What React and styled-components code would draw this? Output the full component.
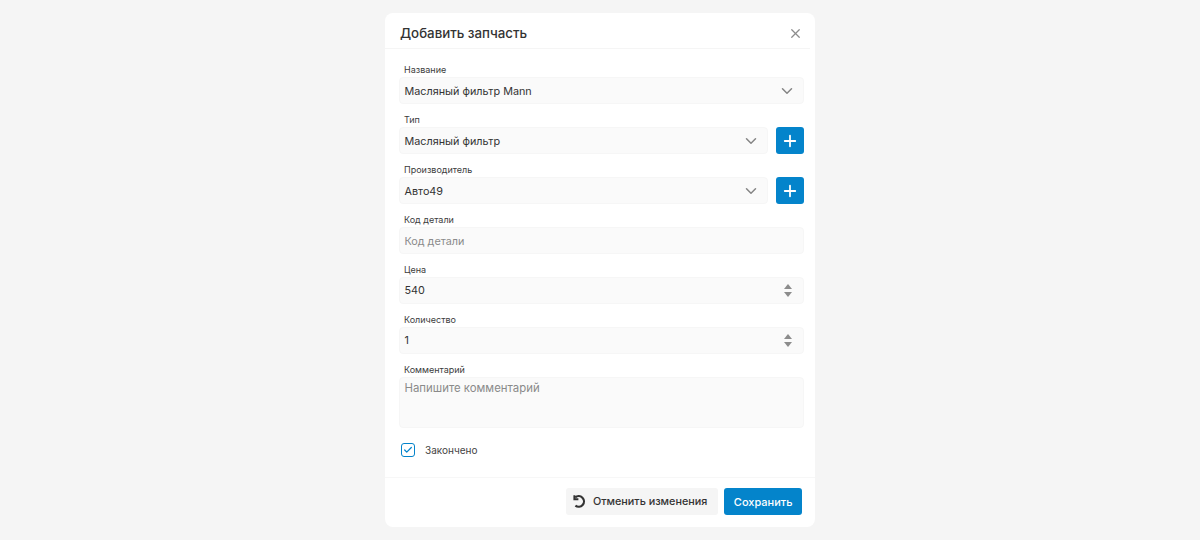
import React from "react";
import styled, { createGlobalStyle } from "styled-components";
import { ChevronDown, Plus, X, Check } from "lucide-react";

const GlobalStyle = createGlobalStyle`
  html, body {
    margin: 0;
    height: 100%;
    background: #f5f5f5;
    font-family: Inter, "Noto Sans", sans-serif;
  }
  * { box-sizing: border-box; }
`;

const Page = styled.div`
  width: 1200px;
  height: 540px;
  padding-top: 13px;
  display: flex;
  justify-content: center;
  align-items: flex-start;
  overflow: hidden;
`;

const Modal = styled.div`
  width: 430px;
  height: 514px;
  background: #fff;
  border-radius: 8px;
  display: flex;
  flex-direction: column;
`;

const Header = styled.div`
  height: 36px;
  margin: 0 5px 0 0;
  padding: 5px 7px 0 15px;
  border-bottom: 1px solid #f5f5f5;
  display: flex;
  align-items: center;
  justify-content: space-between;
`;

const Title = styled.div`
  font-size: 13.3px;
  font-weight: 500;
  color: #333;
`;

const Close = styled.div`
  display: flex;
  color: #8c8c8c;
`;

const Body = styled.div`
  padding: 13px 11.5px 0 14px;
  display: flex;
  flex-direction: column;
  gap: 8px;
`;

const Field = styled.div`
  display: flex;
  flex-direction: column;
`;

const Label = styled.div`
  height: 15px;
  line-height: 15px;
  padding-left: 5px;
  font-size: 9px;
  color: #3c3c3c;
`;

const Row = styled.div`
  display: flex;
  gap: 8px;
`;

const Input = styled.div`
  flex-grow: 1;
  flex-shrink: 0;
  height: ${(p) => (p.$area ? "51px" : "27px")};
  background: #fafafa;
  border: 1px solid #f6f6f6;
  border-radius: 4px;
  padding: ${(p) => (p.$number ? "0 9px 0 4.5px" : "2px 9px 0 4.5px")};
  display: flex;
  align-items: ${(p) => (p.$area ? "flex-start" : "center")};
  justify-content: space-between;
  font-size: ${(p) => (p.$area ? "11.4px" : "10.8px")};
  line-height: 16px;
  color: ${(p) => (p.$empty ? "#8a8a8a" : "#333")};
`;

const Arrow = styled(ChevronDown)`
  color: #858585;
  margin: -2px -2px 0 0;
`;

const AddButton = styled.div`
  width: 28px;
  height: 27px;
  background: #0484cb;
  border-radius: 3px;
  color: #fff;
  display: flex;
  align-items: center;
  justify-content: center;
`;

const Stepper = styled.div`
  display: flex;
  flex-direction: column;
  gap: 3px;
  margin: 0 1.5px 0 0;
`;

const StepUp = styled.div`
  width: 0;
  height: 0;
  border-left: 4.5px solid transparent;
  border-right: 4.5px solid transparent;
  border-bottom: 5px solid #8c8c8c;
`;

const StepDown = styled(StepUp)`
  border-bottom: 0;
  border-top: 5px solid #8c8c8c;
`;

const CheckRow = styled.div`
  margin: 7px 0 0 2px;
  display: flex;
  align-items: center;
  gap: 10px;
  font-size: 10px;
  color: #444;
`;

const CheckBox = styled.div`
  width: 14px;
  height: 14px;
  border: 1.5px solid #0484cb;
  border-radius: 3px;
  color: #0484cb;
  display: flex;
  align-items: center;
  justify-content: center;
`;

const Footer = styled.div`
  margin-top: 20px;
  padding: 10px 13px 0 0;
  border-top: 1px solid #f7f7f7;
  display: flex;
  justify-content: flex-end;
  gap: 6px;
`;

const Button = styled.div`
  height: 27px;
  border-radius: 3px;
  display: flex;
  align-items: center;
  gap: 6px;
  font-size: ${(p) => (p.$primary ? "11px" : "10.8px")};
  font-weight: 500;
  padding: ${(p) => (p.$primary ? "0 9.5px" : "0 11px 0 6px")};
  background: ${(p) => (p.$primary ? "#0484cb" : "#f5f5f5")};
  color: ${(p) => (p.$primary ? "#fff" : "#333")};
`;

const UndoIcon = () => (
  <svg width="15" height="15" viewBox="0 0 15 15" fill="none" stroke="#333" strokeWidth="2.2">
    <path d="M3.2 3.4 A5.3 5.3 0 1 1 3.4 11.6" />
    <path d="M2.4 1.2 V5.2 H6.4" strokeWidth="2" />
  </svg>
);

const SelectField = ({ label, value, add }) => (
  <Field>
    <Label>{label}</Label>
    <Row>
      <Input>
        {value}
        <Arrow size={18} strokeWidth={2} />
      </Input>
      {add && (
        <AddButton>
          <Plus size={18} strokeWidth={2.4} />
        </AddButton>
      )}
    </Row>
  </Field>
);

const NumberField = ({ label, value }) => (
  <Field>
    <Label>{label}</Label>
    <Input $number>
      {value}
      <Stepper>
        <StepUp />
        <StepDown />
      </Stepper>
    </Input>
  </Field>
);

export default function App() {
  return (
    <Page>
      <GlobalStyle />
      <Modal>
        <Header>
          <Title>Добавить запчасть</Title>
          <Close>
            <X size={15} strokeWidth={2} />
          </Close>
        </Header>
        <Body>
          <SelectField label="Название" value="Масляный фильтр Mann" />
          <SelectField label="Тип" value="Масляный фильтр" add />
          <SelectField label="Производитель" value="Авто49" add />
          <Field>
            <Label>Код детали</Label>
            <Input $empty>Код детали</Input>
          </Field>
          <NumberField label="Цена" value="540" />
          <NumberField label="Количество" value="1" />
          <Field>
            <Label>Комментарий</Label>
            <Input $area $empty>
              Напишите комментарий
            </Input>
          </Field>
          <CheckRow>
            <CheckBox>
              <Check size={10} strokeWidth={3} />
            </CheckBox>
            Закончено
          </CheckRow>
        </Body>
        <Footer>
          <Button>
            <UndoIcon />
            Отменить изменения
          </Button>
          <Button $primary>Сохранить</Button>
        </Footer>
      </Modal>
    </Page>
  );
}
